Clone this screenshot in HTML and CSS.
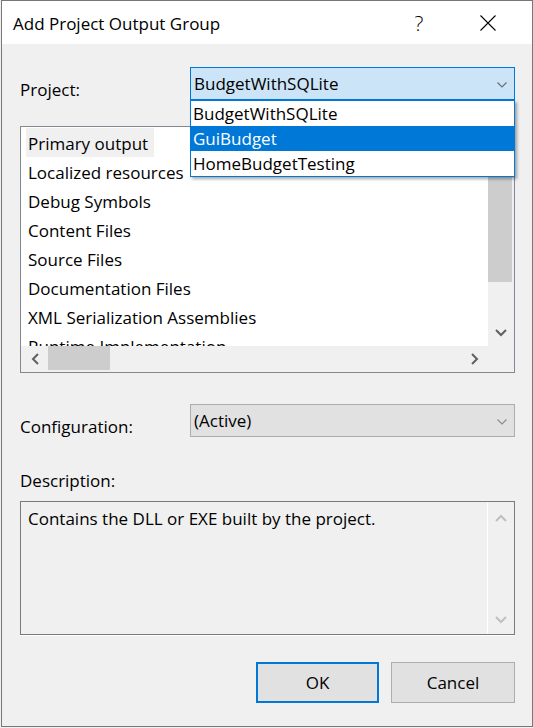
FILE: index.html
```html
<!DOCTYPE html>
<html lang="en">
<head>
<meta charset="utf-8">
<title>Add Project Output Group</title>
<link rel="stylesheet" href="styles.css">
</head>
<body>
<div class="window">
  <div class="titlebar">
    <div class="title">Add Project Output Group</div>
    <div class="tb-btn tb-help">?</div>
    <div class="tb-btn tb-close">
      <svg width="16" height="16" viewBox="0 0 16 16"><path d="M0.5 0.5 L15.5 15.5 M15.5 0.5 L0.5 15.5" stroke="#000" stroke-width="1.1" fill="none"/></svg>
    </div>
  </div>

  <div class="content">
    <div class="field-row">
      <div class="field-label">Project:</div>
      <div class="combo combo-open">
        <span class="combo-text">BudgetWithSQLite</span>
        <svg class="combo-chev" width="10" height="6" viewBox="0 0 10 6"><polyline points="0.5,0.5 5,5 9.5,0.5" stroke="#6a6a6a" stroke-width="1.1" fill="none"/></svg>
        <ul class="dropdown">
          <li>BudgetWithSQLite</li>
          <li class="selected">GuiBudget</li>
          <li>HomeBudgetTesting</li>
        </ul>
      </div>
    </div>

    <div class="listbox">
      <div class="list-view">
        <ul class="items">
          <li><span class="item focused">Primary output</span></li>
          <li><span class="item">Localized resources</span></li>
          <li><span class="item">Debug Symbols</span></li>
          <li><span class="item">Content Files</span></li>
          <li><span class="item">Source Files</span></li>
          <li><span class="item">Documentation Files</span></li>
          <li><span class="item">XML Serialization Assemblies</span></li>
          <li><span class="item">Runtime Implementation</span></li>
        </ul>
      </div>
      <div class="vscroll">
        <div class="sb-btn sb-btn-v"><svg width="12" height="8" viewBox="0 0 12 8"><polyline points="1,7 6,2 11,7" class="arr"/></svg></div>
        <div class="vthumb"></div>
        <div class="sb-fill"></div>
        <div class="sb-btn sb-btn-v"><svg width="12" height="8" viewBox="0 0 12 8"><polyline points="1,1 6,6 11,1" class="arr"/></svg></div>
      </div>
      <div class="hscroll">
        <div class="sb-btn sb-btn-left"><svg width="8" height="12" viewBox="0 0 8 12"><polyline points="7,1 2,6 7,11" class="arr"/></svg></div>
        <div class="hthumb"></div>
        <div class="sb-fill"></div>
        <div class="sb-btn sb-btn-right"><svg width="8" height="12" viewBox="0 0 8 12"><polyline points="1,1 6,6 1,11" class="arr"/></svg></div>
      </div>
      <div class="sb-corner"></div>
    </div>

    <div class="field-row config-row">
      <div class="field-label">Configuration:</div>
      <div class="combo combo-plain">
        <span class="combo-text">(Active)</span>
        <svg class="combo-chev" width="10" height="6" viewBox="0 0 10 6"><polyline points="0.5,0.5 5,5 9.5,0.5" stroke="#8a8a8a" stroke-width="1.1" fill="none"/></svg>
      </div>
    </div>

    <div class="desc-label">Description:</div>
    <div class="desc-box">
      <div class="desc-text">Contains the DLL or EXE built by the project.</div>
      <div class="desc-scroll">
        <svg width="12" height="8" viewBox="0 0 12 8"><polyline points="1,7 6,2 11,7" class="arr-off"/></svg>
        <svg width="12" height="8" viewBox="0 0 12 8"><polyline points="1,1 6,6 11,1" class="arr-off"/></svg>
      </div>
    </div>

    <div class="buttons">
      <div class="btn btn-default">OK</div>
      <div class="btn">Cancel</div>
    </div>
  </div>
</div>
</body>
</html>
```

FILE: styles.css
```css
* {
  box-sizing: border-box;
  margin: 0;
  padding: 0;
}

html, body {
  background: #f0f0f0;
}

body {
  margin: 0;
  font-family: "Open Sans", "Noto Sans", sans-serif;
  font-size: 17px;
  color: #000;
}

.window {
  margin-left: 1px;
  width: 532px;
  height: 727px;
  border: 1px solid #777777;
  background: #f0f0f0;
  display: flex;
  flex-direction: column;
}

/* ---------- title bar ---------- */
.titlebar {
  height: 43px;
  background: #ffffff;
  display: flex;
  padding-right: 9px;
}

.title {
  flex: 1;
  padding-left: 11px;
  padding-top: 2px;
  line-height: 41px;
  white-space: nowrap;
}

.tb-btn {
  display: flex;
  align-items: center;
  justify-content: center;
}

.tb-help {
  width: 60px;
  margin-right: 4px;
  font-size: 21px;
  font-weight: 300;
  padding-top: 1px;
}

.tb-close {
  width: 70px;
  padding-top: 1px;
}

/* ---------- content ---------- */
.content {
  flex: 1;
  padding: 23px 17px 0 18px;
  display: flex;
  flex-direction: column;
}

.field-row {
  display: flex;
  height: 33px;
}

.field-label {
  width: 170px;
  margin-top: 11px;
  line-height: 23px;
  white-space: nowrap;
}

.combo {
  flex: 1;
  position: relative;
  display: flex;
  align-items: flex-start;
  border: 1px solid;
}

.combo-open {
  background: #cce4f7;
  border-color: #0078d7;
}

.combo-plain {
  background: #e1e1e1;
  border-color: #adadad;
}

.combo-text {
  flex: 1;
  padding-left: 3px;
  padding-top: 1px;
  line-height: 30px;
  white-space: nowrap;
}

.combo-chev {
  margin-top: 14px;
  margin-right: 7px;
}

.dropdown {
  list-style: none;
  position: absolute;
  left: -1px;
  right: -1px;
  top: 32px;
  background: #ffffff;
  border: 1px solid #0078d7;
  box-shadow: 2px 2px 3px rgba(0, 0, 0, 0.35);
  z-index: 10;
}

.dropdown li {
  height: 25px;
  line-height: 25px;
  padding-left: 2px;
  white-space: nowrap;
}

.dropdown li.selected {
  background: #0078d7;
  color: #ffffff;
}

/* ---------- list box ---------- */
.listbox {
  margin-top: 26px;
  height: 247px;
  border: 1px solid #828790;
  background: #ffffff;
  display: grid;
  grid-template-columns: 1fr 26px;
  grid-template-rows: 1fr 26px;
  overflow: hidden;
}

.list-view {
  overflow: hidden;
  padding: 1px 0 0 5px;
}

.items {
  list-style: none;
}

.items li {
  height: 29px;
  white-space: nowrap;
}

.item {
  display: inline-block;
  padding: 2px 6px 0 2px;
  line-height: 27px;
}

.item.focused {
  background: #f0f0f0;
}

.vscroll {
  background: #f0f0f0;
  display: flex;
  flex-direction: column;
}

.sb-btn {
  display: flex;
  align-items: center;
  justify-content: center;
}

.sb-btn-v {
  height: 26px;
}

.vthumb {
  width: 24px;
  height: 129px;
  background: #cdcdcd;
}

.sb-fill {
  flex: 1;
}

.hscroll {
  background: #f0f0f0;
  display: flex;
}

.sb-btn-left {
  width: 27px;
}

.sb-btn-right {
  width: 26px;
}

.hthumb {
  width: 62px;
  height: 24px;
  background: #cdcdcd;
}

.sb-corner {
  background: #f0f0f0;
}

.arr {
  fill: none;
  stroke: #606060;
  stroke-width: 2;
}

.arr-off {
  fill: none;
  stroke: #c0c0c0;
  stroke-width: 2;
}

/* ---------- configuration ---------- */
.config-row {
  margin-top: 31px;
}

/* ---------- description ---------- */
.desc-label {
  margin-top: 32px;
  line-height: 23px;
}

.desc-box {
  margin-top: 9px;
  height: 134px;
  border: 1px solid #7a7a7a;
  box-shadow: 0 1px 0 #ffffff;
  background: #f0f0f0;
  display: grid;
  grid-template-columns: 1fr 27px;
}

.desc-text {
  padding: 5px 0 0 7px;
  line-height: 23px;
}

.desc-scroll {
  border-left: 1px solid #ffffff;
  display: flex;
  flex-direction: column;
  align-items: center;
  justify-content: space-between;
  padding: 12px 0 10px;
}

/* ---------- buttons ---------- */
.buttons {
  margin-top: 27px;
  display: flex;
  justify-content: flex-end;
  gap: 12px;
}

.btn {
  width: 124px;
  height: 41px;
  border: 1px solid #adadad;
  background: #e1e1e1;
  display: flex;
  align-items: center;
  justify-content: center;
}

.btn-default {
  width: 123px;
  border: 2px solid #0078d7;
}
```
